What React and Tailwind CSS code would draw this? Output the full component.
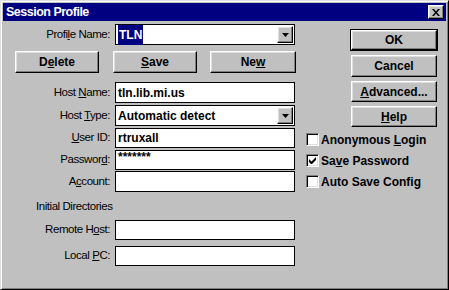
import React from "react";

const raised =
  "bg-[#c0c0c0] border border-t-white border-l-white border-r-black border-b-black shadow-[inset_-1px_-1px_0_#808080,inset_1px_1px_0_#dfdfdf]";

function Btn({ children, className = "" }) {
  return (
    <div
      className={`${raised} flex items-center justify-center font-bold text-[12px] text-black ${className}`}
    >
      {children}
    </div>
  );
}

function DropArrow() {
  return (
    <div className={`${raised} w-[16px] h-[17px] flex items-center justify-center`}>
      <svg width="7" height="4" viewBox="0 0 7 4">
        <path d="M0 0h7L3.5 4z" fill="#000" />
      </svg>
    </div>
  );
}

function Label({ children }) {
  return (
    <span className="w-[107px] text-right text-[11.5px] tracking-[-0.45px] text-black">
      {children}
    </span>
  );
}

function Field({ children, h = "h-[20px]", combo = false }) {
  return (
    <div
      className={`ml-[5px] w-[180px] ${h} bg-white border border-black flex items-center justify-between pl-[2px] pr-[1px] font-bold text-[12px] text-black`}
    >
      <span>{children}</span>
      {combo && <DropArrow />}
    </div>
  );
}

function Check({ checked, children }) {
  return (
    <div className="flex items-center h-[17px]">
      <div className="w-[13px] h-[13px] bg-white border border-t-[#808080] border-l-[#808080] border-r-white border-b-white shadow-[inset_1px_1px_0_#000,inset_-1px_-1px_0_#dfdfdf] flex items-center justify-center">
        {checked && (
          <svg width="7" height="7" viewBox="0 0 7 7">
            <path d="M0 2v3l2 2h1l4-4V0L2.5 4.5z" fill="#000" />
          </svg>
        )}
      </div>
      <span className="ml-[2px] font-bold text-[12px] text-black">{children}</span>
    </div>
  );
}

export default function App() {
  return (
    <div className="w-[449px] h-[290px] bg-[#c0c0c0] border border-t-[#dfdfdf] border-l-[#dfdfdf] border-r-black border-b-black shadow-[inset_1px_1px_0_#fff,inset_-1px_-1px_0_#808080] pt-[2px] px-[2px] flex flex-col font-['Liberation_Sans',Arial,sans-serif] leading-none select-none">
      {/* title bar */}
      <div className="h-[18px] bg-[#000080] flex items-center justify-between pl-[3px] pr-[2px]">
        <span className="text-white font-bold text-[12.5px] tracking-[-0.5px]">Session Profile</span>
        <div className={`${raised} w-[16px] h-[14px] flex items-center justify-center`}>
          <svg width="8" height="7" viewBox="0 0 8 7">
            <path d="M0 0h2l2 2.5L6 0h2L5 3.5 8 7H6L4 4.5 2 7H0l3-3.5z" fill="#000" />
          </svg>
        </div>
      </div>

      <div className="flex">
        {/* left form */}
        <div className="w-[297px] flex flex-col">
          <div className="flex items-center mt-[3px]">
            <Label>
              Profi<u>l</u>e Name:
            </Label>
            <Field h="h-[21px]" combo>
              <span className="bg-[#000080] text-white px-[1px] py-[3px]">TLN</span>
            </Field>
          </div>

          <div className="flex mt-[6px] h-[22px]">
            <Btn className="ml-[12px] w-[84px]">
              D<u>e</u>lete
            </Btn>
            <Btn className="ml-[14px] w-[84px]">
              <u>S</u>ave
            </Btn>
            <Btn className="ml-[13px] w-[86px]">
              Ne<u>w</u>
            </Btn>
          </div>

          <div className="flex items-center mt-[9px]">
            <Label>
              Host <u>N</u>ame:
            </Label>
            <Field h="h-[21px]">tln.lib.mi.us</Field>
          </div>
          <div className="flex items-center mt-[2px]">
            <Label>
              Host <u>T</u>ype:
            </Label>
            <Field h="h-[21px]" combo>
              Automatic detect
            </Field>
          </div>
          <div className="flex items-center mt-[2px]">
            <Label>
              <u>U</u>ser ID:
            </Label>
            <Field>rtruxall</Field>
          </div>
          <div className="flex items-center mt-[2px]">
            <Label>
              Passwor<u>d</u>:
            </Label>
            <Field>
              <span className="relative top-[-3px]">*******</span>
            </Field>
          </div>
          <div className="flex items-center mt-[1px]">
            <Label>
              A<u>c</u>count:
            </Label>
            <Field h="h-[21px]"></Field>
          </div>

          <div className="mt-[8px] h-[14px] pl-[33px] flex items-center text-[11.5px] tracking-[-0.45px] text-black">
            Initial Directories
          </div>

          <div className="flex items-center mt-[6px]">
            <Label>
              Remote H<u>o</u>st:
            </Label>
            <Field></Field>
          </div>
          <div className="flex items-center mt-[6px]">
            <Label>
              Local <u>P</u>C:
            </Label>
            <Field></Field>
          </div>
        </div>

        {/* right column */}
        <div className="flex-1 flex flex-col">
          <div className="ml-[50px] mt-[8px] w-[88px] h-[22px] border border-black flex">
            <Btn className="flex-1">OK</Btn>
          </div>
          <Btn className="ml-[51px] mt-[4px] w-[86px] h-[22px]">Cancel</Btn>
          <Btn className="ml-[51px] mt-[4px] w-[86px] h-[21px]">
            <u>A</u>dvanced...
          </Btn>
          <Btn className="ml-[51px] mt-[4px] w-[86px] h-[21px]">
            <u>H</u>elp
          </Btn>
          <div className="ml-[6px] mt-[4px] flex flex-col gap-[4px]">
            <Check>
              Anonymous <u>L</u>ogin
            </Check>
            <Check checked>
              Sa<u>v</u>e Password
            </Check>
            <Check>Auto Save Config</Check>
          </div>
        </div>
      </div>
    </div>
  );
}
